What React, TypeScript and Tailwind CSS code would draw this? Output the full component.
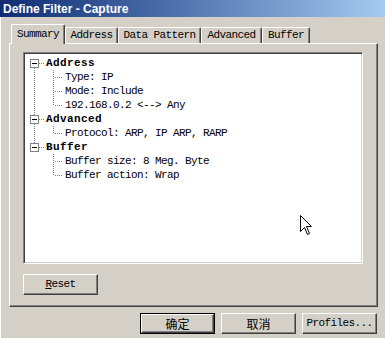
import React from "react";

type Row =
  | { kind: "group"; label: string; first: boolean; last: boolean }
  | { kind: "item"; label: string; parentLast: boolean; lastChild: boolean };

const tree: { title: string; items: string[] }[] = [
  { title: "Address", items: ["Type: IP", "Mode: Include", "192.168.0.2 <--> Any"] },
  { title: "Advanced", items: ["Protocol: ARP, IP ARP, RARP"] },
  { title: "Buffer", items: ["Buffer size: 8 Meg. Byte", "Buffer action: Wrap"] },
];

const rows: Row[] = [];
tree.forEach((g, gi) => {
  const last = gi === tree.length - 1;
  rows.push({ kind: "group", label: g.title, first: gi === 0, last });
  g.items.forEach((it, ii) =>
    rows.push({ kind: "item", label: it, parentLast: last, lastChild: ii === g.items.length - 1 })
  );
});

const dot = { stroke: "#808080", strokeWidth: 1, strokeDasharray: "1 1" };

const GroupGutter: React.FC<{ first: boolean; last: boolean }> = ({ first, last }) => (
  <svg width="22" height="14" className="shrink-0">
    {!first && <line x1="10.5" y1="0" x2="10.5" y2="3" {...dot} />}
    {!last && <line x1="10.5" y1="12" x2="10.5" y2="14" {...dot} />}
    <line x1="15" y1="7.5" x2="21" y2="7.5" {...dot} />
    <rect x="6.5" y="3.5" width="8" height="8" fill="#fff" stroke="#808080" />
    <line x1="8" y1="7.5" x2="13" y2="7.5" stroke="#000" />
  </svg>
);

const ItemGutter: React.FC<{ parentLast: boolean; lastChild: boolean }> = ({ parentLast, lastChild }) => (
  <svg width="41" height="14" className="shrink-0">
    {!parentLast && <line x1="10.5" y1="0" x2="10.5" y2="14" {...dot} />}
    <line x1="29.5" y1="0" x2="29.5" y2={lastChild ? 8 : 14} {...dot} />
    <line x1="31" y1="7.5" x2="39" y2="7.5" {...dot} />
  </svg>
);

const tabs = [
  { label: "Summary", w: "w-[54px]", active: true },
  { label: "Address", w: "w-[53px]", active: false },
  { label: "Data Pattern", w: "w-[83px]", active: false },
  { label: "Advanced", w: "w-[61px]", active: false },
  { label: "Buffer", w: "w-[48px]", active: false },
];

const raised =
  "border border-t-white border-l-white border-r-[#404040] border-b-[#404040] shadow-[inset_-1px_-1px_0_#808080] bg-[#d4d0c8]";

const App: React.FC = () => {
  return (
    <div className="relative w-[385px] h-[338px] overflow-hidden bg-[#d4d0c8] font-['Liberation_Mono',monospace] text-[11px] tracking-[-0.6px] text-black">
      {/* title bar */}
      <div className="h-[17px] flex items-center pl-[3px] bg-gradient-to-r from-[#0f2c74] to-[#a6caf0] font-['Liberation_Sans',sans-serif] font-bold text-[12px] tracking-normal text-white">
        Define Filter - Capture
      </div>

      <div className="pl-[9px] pr-[7px] pt-[7px] shadow-[inset_1px_0_0_#fff]">
        {/* tabs */}
        <div className="flex items-end h-[19px] pl-[2px]">
          {tabs.map((t) => (
            <div
              key={t.label}
              className={`${t.w} flex items-center justify-center rounded-t-[2px] border-t border-l border-r border-t-white border-l-white border-r-[#404040] shadow-[inset_-1px_0_0_#808080] bg-[#d4d0c8] ${
                t.active ? "h-[20px] -mb-px relative z-10" : "h-[16px]"
              }`}
            >
              {t.label}
            </div>
          ))}
        </div>

        {/* panel */}
        <div className={`h-[264px] pl-[13px] pt-[8px] ${raised}`}>
          <div className="w-[340px] h-[212px] bg-white border border-t-[#808080] border-l-[#808080] border-r-white border-b-white shadow-[inset_1px_1px_0_#404040,inset_-1px_-1px_0_#d4d0c8] pt-[3px]">
            {rows.map((r, i) =>
              r.kind === "group" ? (
                <div key={i} className="flex items-center h-[14px]">
                  <GroupGutter first={r.first} last={r.last} />
                  <span className="font-bold tracking-[0.4px] leading-none">{r.label}</span>
                </div>
              ) : (
                <div key={i} className="flex items-center h-[14px]">
                  <ItemGutter parentLast={r.parentLast} lastChild={r.lastChild} />
                  <span className="leading-none whitespace-pre">{r.label}</span>
                </div>
              )
            )}
          </div>

          <div className={`mt-[10px] w-[75px] h-[21px] flex items-center justify-center ${raised}`}>
            <span>
              <span className="underline">R</span>eset
            </span>
          </div>
        </div>
      </div>

      {/* dialog buttons */}
      <div className="flex justify-end gap-[6px] pr-[8px] pt-[6px] h-[50px] shadow-[inset_1px_0_0_#fff]">
        <div className="w-[75px] h-[21px] border border-black">
          <div className={`h-full flex items-center justify-center font-['Noto_Sans_CJK_SC',sans-serif] text-[12px] tracking-normal ${raised}`}>
            确定
          </div>
        </div>
        <div className={`w-[75px] h-[21px] flex items-center justify-center font-['Noto_Sans_CJK_SC',sans-serif] text-[12px] tracking-normal ${raised}`}>
          取消
        </div>
        <div className={`w-[75px] h-[21px] flex items-center justify-center ${raised}`}>Profiles...</div>
      </div>

      {/* mouse pointer */}
      <svg className="absolute left-[300px] top-[215px]" width="13" height="21" viewBox="0 0 13 21">
        <path
          d="M0.5 0.5 L0.5 16.5 L4.5 12.5 L7.5 19.5 L9.5 18.5 L6.5 11.5 L11.5 11.5 Z"
          fill="#fff"
          stroke="#000"
          strokeWidth="1"
        />
      </svg>
    </div>
  );
};

export default App;
